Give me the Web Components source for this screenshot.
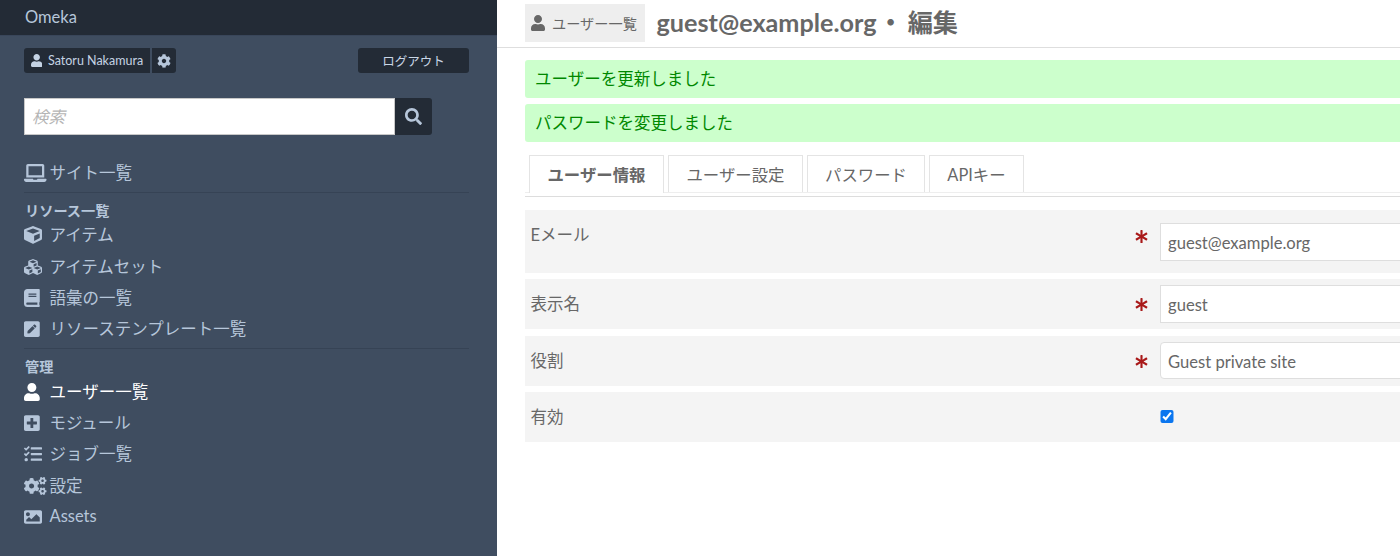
<!DOCTYPE html>
<html lang="ja">
<head>
<meta charset="utf-8">
<title>Omeka</title>
<style>
  html, body { margin: 0; height: 100%; overflow: hidden; }
  body {
    display: flex;
    font-family: Lato, "Noto Sans CJK JP", sans-serif;
    font-size: 16.5px;
    color: #676767;
    background: #fff;
  }
</style>
</head>
<body>
<admin-sidebar title="Omeka">
  <nav-section>
    <nav-link icon="laptop">サイト一覧</nav-link>
  </nav-section>
  <nav-section heading="リソース一覧">
    <nav-link icon="cube">アイテム</nav-link>
    <nav-link icon="cubes">アイテムセット</nav-link>
    <nav-link icon="book">語彙の一覧</nav-link>
    <nav-link icon="pen">リソーステンプレート一覧</nav-link>
  </nav-section>
  <nav-section heading="管理" last>
    <nav-link icon="user" active>ユーザー一覧</nav-link>
    <nav-link icon="plus">モジュール</nav-link>
    <nav-link icon="tasks">ジョブ一覧</nav-link>
    <nav-link icon="cogs">設定</nav-link>
    <nav-link icon="image">Assets</nav-link>
  </nav-section>
</admin-sidebar>

<main-panel>
  <page-header slot="header" crumb="ユーザー一覧" email="guest@example.org" action="編集"></page-header>
  <flash-message>ユーザーを更新しました</flash-message>
  <flash-message>パスワードを変更しました</flash-message>
  <tab-bar>
    <tab-item active width="135">ユーザー情報</tab-item>
    <tab-item width="135">ユーザー設定</tab-item>
    <tab-item width="118">パスワード</tab-item>
    <tab-item width="95">APIキー</tab-item>
  </tab-bar>
  <form-field label="Eメール" required height="63"><text-field value="guest@example.org"></text-field></form-field>
  <form-field label="表示名" required height="50.2" offset="6"><text-field value="guest"></text-field></form-field>
  <form-field label="役割" required height="50.2" offset="6"><text-field value="Guest private site" rounded></text-field></form-field>
  <form-field label="有効" height="50"><check-field></check-field></form-field>
</main-panel>

<script>
// font awesome 5 solid shapes, [width, path], height is always 512
const ICONS = {
  user: [448, "M224 256c70.7 0 128-57.3 128-128S294.7 0 224 0 96 57.3 96 128s57.3 128 128 128zm89.6 32h-16.7c-22.2 10.2-46.9 16-72.9 16s-50.6-5.8-72.9-16h-16.7C60.2 288 0 348.2 0 422.4V464c0 26.5 21.5 48 48 48h352c26.5 0 48-21.5 48-48v-41.6c0-74.2-60.2-134.4-134.4-134.4z"],
  search: [512, "M505 442.7L405.3 343c-4.5-4.5-10.6-7-17-7H372c27.6-35.3 44-79.7 44-128C416 93.1 322.9 0 208 0S0 93.1 0 208s93.1 208 208 208c48.3 0 92.7-16.4 128-44v16.3c0 6.4 2.5 12.5 7 17l99.7 99.7c9.4 9.4 24.6 9.4 33.9 0l28.3-28.3c9.4-9.4 9.4-24.6.1-34zM208 336c-70.7 0-128-57.2-128-128 0-70.7 57.2-128 128-128 70.7 0 128 57.2 128 128 0 70.7-57.2 128-128 128z"],
  cog: [512, "M487.4 315.7l-42.6-24.6c4.3-23.2 4.3-47 0-70.2l42.6-24.6c4.9-2.8 7.1-8.6 5.5-14-11.1-35.6-30-67.8-54.7-94.6-3.8-4.1-10-5.1-14.8-2.3L380.8 110c-17.9-15.4-38.5-27.3-60.8-35.1V25.8c0-5.6-3.9-10.5-9.4-11.7-36.7-8.2-74.3-7.8-109.2 0-5.5 1.2-9.4 6.1-9.4 11.7V75c-22.2 7.9-42.8 19.8-60.8 35.1L88.7 85.5c-4.9-2.8-11-1.9-14.8 2.3-24.7 26.7-43.6 58.9-54.7 94.6-1.7 5.4.6 11.2 5.5 14L67.3 221c-4.3 23.2-4.3 47 0 70.2l-42.6 24.6c-4.9 2.8-7.1 8.6-5.5 14 11.1 35.6 30 67.8 54.7 94.6 3.8 4.1 10 5.1 14.8 2.3l42.6-24.6c17.9 15.4 38.5 27.3 60.8 35.1v49.2c0 5.6 3.9 10.5 9.4 11.7 36.7 8.2 74.3 7.8 109.2 0 5.5-1.2 9.4-6.1 9.4-11.7v-49.2c22.2-7.9 42.8-19.8 60.8-35.1l42.6 24.6c4.9 2.8 11 1.9 14.8-2.3 24.7-26.7 43.6-58.9 54.7-94.6 1.5-5.5-.7-11.3-5.6-14.1zM256 336c-44.1 0-80-35.9-80-80s35.9-80 80-80 80 35.9 80 80-35.9 80-80 80z"],
  laptop: [640, "M624 416H381.54c-.74 19.81-14.71 32-32.74 32H288c-18.69 0-33.02-17.47-32.77-32H16c-8.8 0-16 7.2-16 16v16c0 35.2 28.8 64 64 64h512c35.2 0 64-28.8 64-64v-16c0-8.8-7.2-16-16-16zM576 48c0-26.4-21.6-48-48-48H112C85.6 0 64 21.6 64 48v336h512V48zm-64 272H128V64h384v256z"],
  cube: [512, "M239.1 6.3l-208 78c-18.7 7-31.1 25-31.1 45v225.1c0 18.2 10.3 34.8 26.5 42.9l208 104c13.5 6.8 29.4 6.8 42.9 0l208-104c16.3-8.1 26.5-24.8 26.5-42.9V129.3c0-20-12.4-37.9-31.1-44.9l-208-78C262 2.2 250 2.2 239.1 6.3zM256 68.4l192 72v1.1l-192 78-192-78v-1.1l192-72zm32 356V275.5l160-65v133.9l-160 80z"],
  cubes: [512, "M488.6 250.2L392 214V105.5c0-15-9.3-28.4-23.4-33.7l-100-37.5c-8.1-3.1-17.1-3.1-25.3 0l-100 37.5c-14.1 5.3-23.4 18.7-23.4 33.7V214l-96.6 36.2C9.3 255.5 0 268.9 0 283.9V394c0 13.6 7.7 26.1 19.9 32.2l100 50c10.1 5.1 22.1 5.1 32.2 0l103.9-52 103.9 52c10.1 5.1 22.1 5.1 32.2 0l100-50c12.2-6.1 19.9-18.6 19.9-32.2V283.9c0-15-9.3-28.4-23.4-33.7zM358 214.8l-85 31.9v-68.2l85-37v73.3zM154 104.1l102-38.2 102 38.2v.6l-102 41.4-102-41.4v-.6zm84 291.1l-85 42.5v-79.1l85-38.8v75.4zm0-112l-102 41.4-102-41.4v-.6l102-38.2 102 38.2v.6zm240 112l-85 42.5v-79.1l85-38.8v75.4zm0-112l-102 41.4-102-41.4v-.6l102-38.2 102 38.2v.6z"],
  book: [448, "M448 360V24c0-13.3-10.7-24-24-24H96C43 0 0 43 0 96v320c0 53 43 96 96 96h328c13.3 0 24-10.7 24-24v-16c0-7.5-3.5-14.3-8.9-18.7-4.2-15.4-4.2-59.3 0-74.7 5.4-4.3 8.9-11.1 8.9-18.6zM128 134c0-3.3 2.7-6 6-6h212c3.3 0 6 2.7 6 6v20c0 3.3-2.7 6-6 6H134c-3.3 0-6-2.7-6-6v-20zm0 64c0-3.3 2.7-6 6-6h212c3.3 0 6 2.7 6 6v20c0 3.3-2.7 6-6 6H134c-3.3 0-6-2.7-6-6v-20zm253.4 250H96c-17.7 0-32-14.3-32-32 0-17.6 14.4-32 32-32h285.4c-1.9 17.1-1.9 46.9 0 64z"],
  pen: [448, "M400 480H48c-26.5 0-48-21.5-48-48V80c0-26.5 21.5-48 48-48h352c26.5 0 48 21.5 48 48v352c0 26.5-21.5 48-48 48zM238.1 177.9L102.4 313.6l-6.3 57.1c-.8 7.6 5.6 14.1 13.3 13.3l57.1-6.3L302.2 242c2.3-2.3 2.3-6.1 0-8.5L246.7 178c-2.5-2.4-6.3-2.4-8.6-.1zM345 165.1L314.9 135c-9.4-9.4-24.6-9.4-33.9 0l-23.1 23.1c-2.3 2.3-2.3 6.1 0 8.5l55.5 55.5c2.3 2.3 6.1 2.3 8.5 0L345 199c9.3-9.3 9.3-24.5 0-33.9z"],
  plus: [448, "M400 32H48C21.5 32 0 53.5 0 80v352c0 26.5 21.5 48 48 48h352c26.5 0 48-21.5 48-48V80c0-26.5-21.5-48-48-48zm-32 252c0 6.6-5.4 12-12 12h-92v92c0 6.6-5.4 12-12 12h-56c-6.6 0-12-5.4-12-12v-92H92c-6.6 0-12-5.4-12-12v-56c0-6.6 5.4-12 12-12h92v-92c0-6.6 5.4-12 12-12h56c6.6 0 12 5.4 12 12v92h92c6.6 0 12 5.4 12 12v56z"],
  tasks: [512, "M139.61 35.5a12 12 0 0 0-17 0L58.93 98.81l-22.7-22.12a12 12 0 0 0-17 0L3.53 92.41a12 12 0 0 0 0 17l47.59 47.4a12.78 12.78 0 0 0 17.61 0l15.59-15.62L156.52 69a12.09 12.09 0 0 0 .09-17zm0 159.19a12 12 0 0 0-17 0l-63.68 63.72-22.7-22.1a12 12 0 0 0-17 0L3.53 252a12 12 0 0 0 0 17L51 316.5a12.77 12.77 0 0 0 17.6 0l15.7-15.69 72.2-72.22a12 12 0 0 0 .09-16.9zM64 368c-26.49 0-48.59 21.5-48.59 48S37.53 464 64 464a48 48 0 0 0 0-96zm432 16H208a16 16 0 0 0-16 16v32a16 16 0 0 0 16 16h288a16 16 0 0 0 16-16v-32a16 16 0 0 0-16-16zm0-320H208a16 16 0 0 0-16 16v32a16 16 0 0 0 16 16h288a16 16 0 0 0 16-16V80a16 16 0 0 0-16-16zm0 160H208a16 16 0 0 0-16 16v32a16 16 0 0 0 16 16h288a16 16 0 0 0 16-16v-32a16 16 0 0 0-16-16z"],
  cogs: [640, "M512.1 191l-8.2 14.3c-3 5.3-9.4 7.5-15.1 5.4-11.8-4.4-22.6-10.7-32.1-18.6-4.6-3.8-5.8-10.5-2.8-15.7l8.2-14.3c-6.9-8-12.3-17.3-15.9-27.4h-16.5c-6 0-11.2-4.3-12.2-10.3-2-12-2.1-24.6 0-37.1 1-6 6.2-10.4 12.2-10.4h16.5c3.6-10.1 9-19.4 15.9-27.4l-8.2-14.3c-3-5.2-1.9-11.9 2.8-15.7 9.5-7.9 20.4-14.2 32.1-18.6 5.7-2.1 12.1.1 15.1 5.4l8.2 14.3c10.5-1.9 21.2-1.9 31.7 0L552 6.3c3-5.3 9.4-7.5 15.1-5.4 11.8 4.4 22.6 10.7 32.1 18.6 4.6 3.8 5.8 10.5 2.8 15.7l-8.2 14.3c6.9 8 12.3 17.3 15.9 27.4h16.5c6 0 11.2 4.3 12.2 10.3 2 12 2.1 24.6 0 37.1-1 6-6.2 10.4-12.2 10.4h-16.5c-3.6 10.1-9 19.4-15.9 27.4l8.2 14.3c3 5.2 1.9 11.9-2.8 15.7-9.5 7.9-20.4 14.2-32.1 18.6-5.7 2.1-12.1-.1-15.1-5.4l-8.2-14.3c-10.4 1.9-21.2 1.9-31.7 0zm-10.5-58.8c38.5 29.6 82.4-14.3 52.8-52.8-38.5-29.7-82.4 14.3-52.8 52.8zM386.3 286.1l33.7 16.8c10.1 5.8 14.5 18.1 10.5 29.1-8.9 24.2-26.4 46.4-42.6 65.8-7.4 8.9-20.2 11.1-30.3 5.3l-29.1-16.8c-16 13.7-34.6 24.6-54.9 31.7v33.6c0 11.6-8.3 21.6-19.7 23.6-24.6 4.2-50.4 4.4-75.9 0-11.5-2-20-11.9-20-23.6V418c-20.3-7.2-38.9-18-54.9-31.7L74 403c-10 5.8-22.9 3.6-30.3-5.3-16.2-19.4-33.3-41.6-42.2-65.7-4-10.9.4-23.2 10.5-29.1l33.3-16.8c-3.9-20.9-3.9-42.4 0-63.4L12 205.8c-10.1-5.8-14.6-18.1-10.5-29 8.9-24.2 26-46.4 42.2-65.8 7.4-8.9 20.2-11.1 30.3-5.3l29.1 16.8c16-13.7 34.6-24.6 54.9-31.7V57.1c0-11.5 8.2-21.5 19.6-23.5 24.6-4.2 50.5-4.4 76-.1 11.5 2 20 11.9 20 23.6v33.6c20.3 7.2 38.9 18 54.9 31.7l29.1-16.8c10-5.8 22.9-3.6 30.3 5.3 16.2 19.4 33.2 41.6 42.1 65.8 4 10.9.1 23.2-10 29.1l-33.7 16.8c3.9 21 3.9 42.5 0 63.5zm-117.6 21.1c59.2-77-28.7-164.9-105.7-105.7-59.2 77 28.7 164.9 105.7 105.7zm243.4 182.7l-8.2 14.3c-3 5.3-9.4 7.5-15.1 5.4-11.8-4.4-22.6-10.7-32.1-18.6-4.6-3.8-5.8-10.5-2.8-15.7l8.2-14.3c-6.9-8-12.3-17.3-15.9-27.4h-16.5c-6 0-11.2-4.3-12.2-10.3-2-12-2.1-24.6 0-37.1 1-6 6.2-10.4 12.2-10.4h16.5c3.6-10.1 9-19.4 15.9-27.4l-8.2-14.3c-3-5.2-1.9-11.9 2.8-15.7 9.5-7.9 20.4-14.2 32.1-18.6 5.7-2.1 12.1.1 15.1 5.4l8.2 14.3c10.5-1.9 21.2-1.9 31.7 0l8.2-14.3c3-5.3 9.4-7.5 15.1-5.4 11.8 4.4 22.6 10.7 32.1 18.6 4.6 3.8 5.8 10.5 2.8 15.7l-8.2 14.3c6.9 8 12.3 17.3 15.9 27.4h16.5c6 0 11.2 4.3 12.2 10.3 2 12 2.1 24.6 0 37.1-1 6-6.2 10.4-12.2 10.4h-16.5c-3.6 10.1-9 19.4-15.9 27.4l8.2 14.3c3 5.2 1.9 11.9-2.8 15.7-9.5 7.9-20.4 14.2-32.1 18.6-5.7 2.1-12.1-.1-15.1-5.4l-8.2-14.3c-10.4 1.9-21.2 1.9-31.7 0zM501.6 431c38.5 29.6 82.4-14.3 52.8-52.8-38.5-29.6-82.4 14.3-52.8 52.8z"],
  image: [512, "M464 448H48c-26.51 0-48-21.49-48-48V112c0-26.51 21.49-48 48-48h416c26.51 0 48 21.49 48 48v288c0 26.51-21.49 48-48 48zM112 120c-30.928 0-56 25.072-56 56s25.072 56 56 56 56-25.072 56-56-25.072-56-56-56zM64 384h384V272l-87.515-87.515c-4.686-4.686-12.284-4.686-16.971 0L208 320l-55.515-55.515c-4.686-4.686-12.284-4.686-16.971 0L64 336v48z"],
  asterisk: [512, "M478.21 334.093L336 256l142.21-78.093c11.795-6.477 15.961-21.384 9.232-33.037l-19.48-33.741c-6.728-11.653-21.72-15.499-33.227-8.523L296 186.718l3.475-162.204C299.763 11.061 288.937 0 275.48 0h-38.96c-13.456 0-24.283 11.061-23.994 24.514L216 186.718 77.265 102.607c-11.506-6.976-26.499-3.13-33.227 8.523l-19.48 33.741c-6.728 11.653-2.562 26.56 9.233 33.037L176 256 33.79 334.093c-11.795 6.477-15.961 21.384-9.232 33.037l19.48 33.741c6.728 11.653 21.721 15.499 33.227 8.523L216 325.282l-3.475 162.204C212.237 500.939 223.064 512 236.521 512h38.961c13.457 0 24.283-11.061 23.995-24.514L296 325.282l138.735 84.111c11.506 6.976 26.499 3.13 33.227-8.523l19.48-33.741c6.728-11.653 2.563-26.559-9.232-33.036z"],
};

class FaIcon extends HTMLElement {
  connectedCallback() {
    const [w, d] = ICONS[this.getAttribute("name")];
    const size = this.getAttribute("size") || 16;
    this.attachShadow({ mode: "open" }).innerHTML = `
      <style>
        :host { display: inline-flex; flex: none; }
        svg { display: block; height: ${size}px; width: ${w / 512 * size}px; fill: currentColor; }
      </style>
      <svg viewBox="0 0 ${w} 512"><path d="${d}"></path></svg>
    `;
  }
}
customElements.define("fa-icon", FaIcon);

class AdminSidebar extends HTMLElement {
  constructor() {
    super();
    this.attachShadow({ mode: "open" }).innerHTML = `
      <style>
        :host {
          display: block;
          flex: none;
          width: 497px;
          height: 556px;
          background: #3f4d60;
          color: #b6c6da;
          overflow: hidden;
        }
        header {
          height: 35px;
          border-bottom: 1px solid #39465a;
          background: #232b36;
          padding-left: 25px;
          line-height: 34px;
          font-size: 16.5px;
        }
        .user {
          display: flex;
          align-items: stretch;
          height: 25px;
          margin: 12px 28px 0 24px;
          font-size: 12.5px;
        }
        .chip {
          display: flex;
          align-items: center;
          background: #232b36;
          color: #b6c6da;
        }
        .name { width: 126px; box-sizing: border-box; padding-left: 7px; gap: 5.6px; border-radius: 3px 0 0 3px; color: #c5d3e4; }
        .gear { width: 24px; margin-left: 2px; justify-content: center; border-radius: 0 3px 3px 0; }
        .logout {
          width: 111px;
          margin-left: auto;
          justify-content: center;
          border-radius: 3px;
          color: #c9d6e6;
        }
        .search { display: flex; margin: 25px 0 22px 24px; height: 37px; }
        .search .box {
          box-sizing: border-box;
          width: 370.5px;
          border: 1px solid #c8c8c8;
          background: #fff;
          color: #b5b5b5;
          font-style: italic;
          font-size: 16.5px;
          line-height: 37px;
          padding-left: 7px;
        }
        .search .go {
          display: flex;
          align-items: center;
          justify-content: center;
          width: 37.5px;
          background: #232b36;
          border-radius: 0 3px 3px 0;
          color: #b6c6da;
        }
        nav { margin: 0 28px 0 24px; }
      </style>
      <header></header>
      <div class="user">
        <span class="chip name"><fa-icon name="user" size="13"></fa-icon>Satoru Nakamura</span>
        <span class="chip gear"><fa-icon name="cog" size="14"></fa-icon></span>
        <span class="chip logout">ログアウト</span>
      </div>
      <div class="search">
        <div class="box">検索</div>
        <div class="go"><fa-icon name="search" size="17"></fa-icon></div>
      </div>
      <nav><slot></slot></nav>
    `;
    this.shadowRoot.querySelector("header").textContent = this.getAttribute("title");
    this.removeAttribute("title");
  }
}
customElements.define("admin-sidebar", AdminSidebar);

class NavSection extends HTMLElement {
  constructor() {
    super();
    const heading = this.getAttribute("heading");
    this.attachShadow({ mode: "open" }).innerHTML = `
      <style>
        :host { display: block; padding-bottom: 3.5px; border-bottom: 1px solid #364355; margin-bottom: 9px; }
        :host([last]) { border-bottom: none; }
        h4 { margin: 0 0 0 1px; font-size: 14.2px; line-height: 17px; padding-bottom: 1px; font-weight: 700; color: #b6c6da; }
      </style>
      ${heading ? `<h4>${heading}</h4>` : ""}
      <slot></slot>
    `;
  }
}
customElements.define("nav-section", NavSection);

class NavLink extends HTMLElement {
  constructor() {
    super();
    this.attachShadow({ mode: "open" }).innerHTML = `
      <style>
        :host { display: flex; align-items: center; height: 31.25px; font-size: 16.5px; color: #b6c6da; }
        :host([active]) { color: #fff; }
        .ico { display: flex; width: 25.5px; flex: none; }
        .txt { padding-bottom: 2px; }
      </style>
      <span class="ico"><fa-icon name="${this.getAttribute("icon")}" size="18"></fa-icon></span>
      <span class="txt"><slot></slot></span>
    `;
  }
}
customElements.define("nav-link", NavLink);

class MainPanel extends HTMLElement {
  constructor() {
    super();
    this.attachShadow({ mode: "open" }).innerHTML = `
      <style>
        :host { display: block; flex: 1; min-width: 0; overflow: hidden; background: #fff; }
        .body { padding: 12px 0 0 27.5px; margin-right: -20px; }
      </style>
      <slot name="header"></slot>
      <div class="body"><slot></slot></div>
    `;
  }
}
customElements.define("main-panel", MainPanel);

class PageHeader extends HTMLElement {
  constructor() {
    super();
    this.attachShadow({ mode: "open" }).innerHTML = `
      <style>
        :host {
          display: flex;
          align-items: center;
          box-sizing: border-box;
          height: 48px;
          padding: 0 0 2px 27.5px;
          border-bottom: 1px solid #dedede;
          color: #676767;
        }
        .crumb {
          display: flex;
          align-items: center;
          gap: 7.5px;
          box-sizing: border-box;
          width: 120px;
          height: 38px;
          padding-left: 6px;
          background: #eee;
          font-size: 14.2px;
        }
        h1 { margin: 0 0 2px 12px; font-size: 25.2px; font-weight: 700; line-height: 36px; white-space: nowrap; }
        .sep { margin: 0 4.5px 0 1.5px; }
      </style>
      <span class="crumb"><fa-icon name="user" size="16"></fa-icon>${this.getAttribute("crumb")}</span>
      <h1>${this.getAttribute("email")}<span class="sep">・</span>${this.getAttribute("action")}</h1>
    `;
  }
}
customElements.define("page-header", PageHeader);

class FlashMessage extends HTMLElement {
  constructor() {
    super();
    this.attachShadow({ mode: "open" }).innerHTML = `
      <style>
        :host {
          display: flex;
          align-items: center;
          box-sizing: border-box;
          height: 37.5px;
          margin-bottom: 6.5px;
          padding: 0 0 1.5px 10.5px;
          background: #cfc;
          color: #080;
          border-radius: 3px;
          font-size: 16.5px;
        }
      </style>
      <slot></slot>
    `;
  }
}
customElements.define("flash-message", FlashMessage);

class TabBar extends HTMLElement {
  constructor() {
    super();
    this.attachShadow({ mode: "open" }).innerHTML = `
      <style>
        :host {
          display: block;
          margin-top: 13.5px;
          padding-bottom: 3px;
          border-bottom: 1px solid #ddd;
        }
        .row {
          display: flex;
          align-items: flex-start;
          gap: 4px;
          box-sizing: border-box;
          height: 38px;
          padding-left: 4.5px;
          border-bottom: 1.5px solid #eee;
        }
      </style>
      <div class="row"><slot></slot></div>
    `;
  }
}
customElements.define("tab-bar", TabBar);

class TabItem extends HTMLElement {
  constructor() {
    super();
    this.attachShadow({ mode: "open" }).innerHTML = `
      <style>
        :host {
          display: flex;
          align-items: center;
          justify-content: center;
          box-sizing: border-box;
          width: ${this.getAttribute("width")}px;
          height: 36.5px;
          border: 1px solid #e4e4e4;
          border-right-width: 1.5px;
          border-bottom: none;
          background: #fff;
          font-size: 16.4px;
          color: #676767;
        }
        :host([active]) { font-weight: 700; height: 38px; padding-bottom: 1px; }
      </style>
      <slot></slot>
    `;
  }
}
customElements.define("tab-item", TabItem);

class FormField extends HTMLElement {
  constructor() {
    super();
    const h = this.getAttribute("height");
    const top = this.getAttribute("offset") || 13;
    this.attachShadow({ mode: "open" }).innerHTML = `
      <style>
        :host {
          display: flex;
          align-items: flex-start;
          box-sizing: border-box;
          height: ${h}px;
          margin-bottom: 6.2px;
          padding: ${top}px 0 0 6px;
          background: #f4f4f4;
          font-size: 16.5px;
          color: #676767;
        }
        :host(:first-of-type) { margin-top: 13px; }
        label { flex: 1; line-height: 24px; margin-top: ${top == 6 ? 7 : 0}px; }
        .req {
          display: flex;
          justify-content: center;
          width: 38px;
          flex: none;
          margin-top: ${top == 6 ? 13 : 7}px;
          color: #a91919;
        }
        .ctl { width: 260px; flex: none; }
      </style>
      <label>${this.getAttribute("label")}</label>
      <span class="req">${this.hasAttribute("required") ? '<fa-icon name="asterisk" size="13"></fa-icon>' : ""}</span>
      <div class="ctl"><slot></slot></div>
    `;
  }
}
customElements.define("form-field", FormField);

class TextField extends HTMLElement {
  constructor() {
    super();
    this.attachShadow({ mode: "open" }).innerHTML = `
      <style>
        :host {
          display: block;
          box-sizing: border-box;
          height: 37.5px;
          border: 1px solid #dedede;
          background: #fff;
          padding-left: 7px;
          line-height: 38.5px;
          font-size: 16.6px;
          color: #676767;
        }
        :host([rounded]) { border-radius: 4px 0 0 4px; }
      </style>
      ${this.getAttribute("value")}
    `;
  }
}
customElements.define("text-field", TextField);

class CheckField extends HTMLElement {
  constructor() {
    super();
    this.attachShadow({ mode: "open" }).innerHTML = `
      <style>
        :host { display: block; padding-top: 5px; }
        input { display: block; width: 13.5px; height: 13.5px; margin: 0; accent-color: #0b76ef; }
      </style>
      <input type="checkbox" checked>
    `;
  }
}
customElements.define("check-field", CheckField);
</script>
</body>
</html>
